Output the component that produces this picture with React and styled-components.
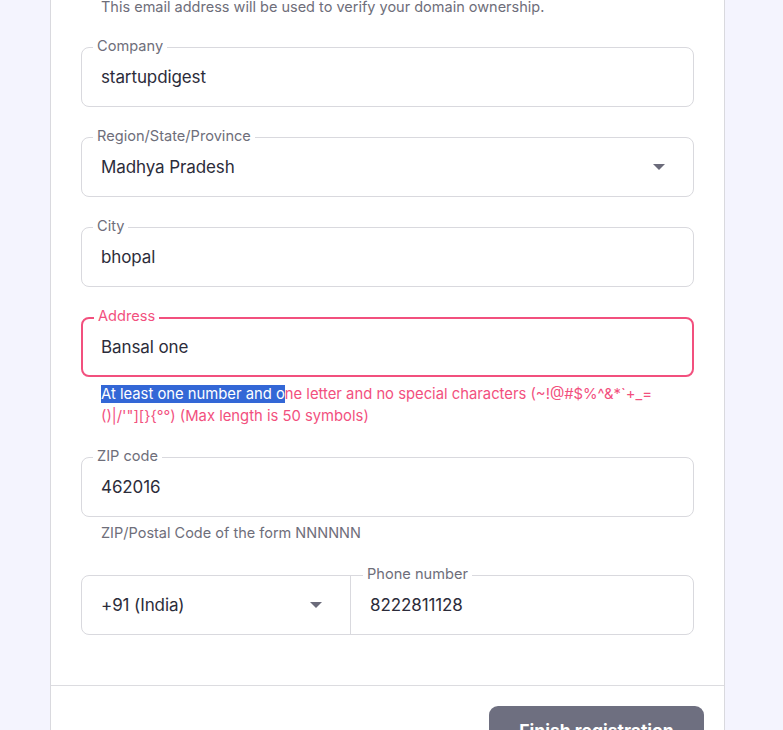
import React from 'react'
import styled, { createGlobalStyle } from 'styled-components'

const GlobalStyle = createGlobalStyle`
  html, body {
    margin: 0;
    padding: 0;
    background: #f4f4fe;
    font-family: Inter, "Noto Sans", sans-serif;
    overflow: hidden;
  }
`

const Page = styled.div`
  height: 730px;
  overflow: hidden;
`

const Card = styled.div`
  width: 673px;
  margin: -3px 0 0 50px;
  background: #ffffff;
  border-left: 1px solid #d9d9de;
  border-right: 1px solid #d9d9de;
  min-height: 800px;
`

const Form = styled.div`
  display: flex;
  flex-direction: column;
  gap: 30px;
  padding: 0 30px 50px 30px;
  border-bottom: 1px solid #dcdce0;
`

const Group = styled.div`
  display: flex;
  flex-direction: column;
  margin-bottom: ${p => p.$bottom || 0}px;
`

const Hint = styled.div`
  font-size: ${p => (p.$error ? '14.8px' : '14.5px')};
  color: ${p => (p.$error ? '#f2507e' : '#6e6e7a')};
  padding-left: 20px;
  margin-top: ${p => p.$top || 0}px;
  line-height: ${p => (p.$error ? '22px' : '20px')};
  white-space: nowrap;
`

const Field = styled.div`
  position: relative;
  height: ${p => (p.$error ? 56 : 58)}px;
  border: ${p => (p.$error ? '2px solid #f2507e' : '1px solid #d9d9de')};
  border-radius: 8px;
  display: flex;
  align-items: center;
  padding: 0 ${p => (p.$error ? 27 : 28)}px 0 ${p => (p.$error ? 18 : 19)}px;
`

const Label = styled.span`
  position: absolute;
  top: ${p => (p.$error ? -12 : -11)}px;
  left: ${p => p.$left || 11}px;
  padding: 0 4px;
  background: #ffffff;
  font-size: 14.6px;
  line-height: 18px;
  color: ${p => (p.$error ? '#f2507e' : '#6e6e7a')};
`

const Value = styled.span`
  flex: 1;
  font-size: 17px;
  color: #2c2c3a;
  letter-spacing: -0.1px;
`

const Caret = styled.span`
  width: 0;
  height: 0;
  border-left: 6px solid transparent;
  border-right: 6px solid transparent;
  border-top: 6px solid #6b6b7a;
`

const Split = styled.div`
  height: 100%;
  display: flex;
  align-items: center;
  flex: ${p => (p.$grow ? 1 : 'none')};
  width: ${p => (p.$grow ? 'auto' : '250px')};
  padding-right: ${p => (p.$grow ? 0 : 28)}px;
  border-right: ${p => (p.$grow ? 'none' : '1px solid #d9d9de')};
  padding-left: ${p => (p.$grow ? 19 : 0)}px;
  box-sizing: border-box;
`

const PhoneField = styled(Field)`
  padding: 0 0 0 19px;
`

const Selected = styled.span`
  background: #3367d6;
  color: #ffffff;
`

const Footer = styled.div`
  display: flex;
  justify-content: flex-end;
  padding: 20px 20px 0 0;
`

const Button = styled.button`
  width: 215px;
  height: 60px;
  border: none;
  border-radius: 9px;
  background: #6e6f80;
  color: #ffffff;
  font-family: inherit;
  font-size: 17.5px;
  font-weight: 700;
  padding-bottom: 12px;
`

const TextField = ({ label, value, select, error }) => (
  <Field $error={error}>
    <Label $error={error}>{label}</Label>
    <Value>{value}</Value>
    {select && <Caret />}
  </Field>
)

export default function App () {
  return (
    <Page>
      <GlobalStyle />
      <Card>
        <Form>
          <Hint>This email address will be used to verify your domain ownership.</Hint>
          <TextField label='Company' value='startupdigest' />
          <TextField label='Region/State/Province' value='Madhya Pradesh' select />
          <TextField label='City' value='bhopal' />
          <Group>
            <TextField label='Address' value='Bansal one' error />
            <Hint $error $top={6}>
              <Selected>At least one number and o</Selected>ne letter and no special characters (~!@#$%^&amp;*`+_=<br />
              ()|/'"][}{'{'}°°) (Max length is 50 symbols)
            </Hint>
          </Group>
          <Group $bottom={2}>
            <TextField label='ZIP code' value='462016' />
            <Hint $top={6}>ZIP/Postal Code of the form NNNNNN</Hint>
          </Group>
          <PhoneField>
            <Split>
              <Value>+91 (India)</Value>
              <Caret />
            </Split>
            <Split $grow>
              <Label $left={281}>Phone number</Label>
              <Value>8222811128</Value>
            </Split>
          </PhoneField>
        </Form>
        <Footer>
          <Button>Finish registration</Button>
        </Footer>
      </Card>
    </Page>
  )
}
